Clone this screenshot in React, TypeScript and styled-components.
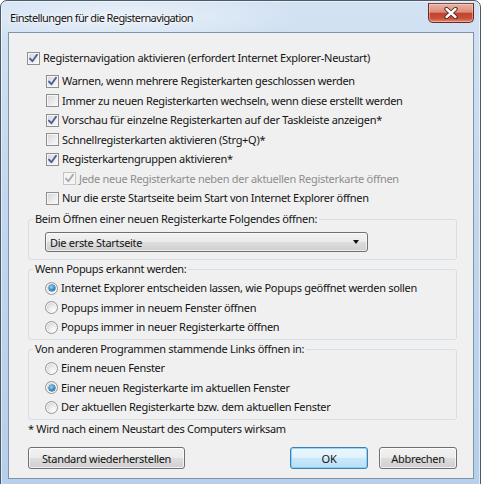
import React from 'react';
import styled, { createGlobalStyle } from 'styled-components';

const GlobalStyle = createGlobalStyle`
  html, body {
    margin: 0;
    padding: 0;
    background: #ffffff;
  }
  body {
    font-family: "Noto Sans", "Open Sans", sans-serif;
    font-size: 11px;
    letter-spacing: -0.3px;
    color: #141414;
    overflow: hidden;
  }
`;

type CheckOption = { label: string; checked?: boolean; disabled?: boolean; level: 1 | 2 };

const tabOptions: CheckOption[] = [
  { label: 'Warnen, wenn mehrere Registerkarten geschlossen werden', checked: true, level: 1 },
  { label: 'Immer zu neuen Registerkarten wechseln, wenn diese erstellt werden', level: 1 },
  { label: 'Vorschau für einzelne Registerkarten auf der Taskleiste anzeigen*', checked: true, level: 1 },
  { label: 'Schnellregisterkarten aktivieren (Strg+Q)*', level: 1 },
  { label: 'Registerkartengruppen aktivieren*', checked: true, level: 1 },
  { label: 'Jede neue Registerkarte neben der aktuellen Registerkarte öffnen', checked: true, disabled: true, level: 2 },
  { label: 'Nur die erste Startseite beim Start von Internet Explorer öffnen', level: 1 },
];

const popupOptions = [
  'Internet Explorer entscheiden lassen, wie Popups geöffnet werden sollen',
  'Popups immer in neuem Fenster öffnen',
  'Popups immer in neuer Registerkarte öffnen',
];

const linkOptions = [
  'Einem neuen Fenster',
  'Einer neuen Registerkarte im aktuellen Fenster',
  'Der aktuellen Registerkarte bzw. dem aktuellen Fenster',
];

function CheckBox({ checked, disabled }: { checked?: boolean; disabled?: boolean }) {
  return (
    <Box $disabled={disabled}>
      {checked && (
        <svg width="11" height="11" viewBox="0 0 11 11">
          <path
            d="M2 5.6 L4.4 8.2 L9 1.8"
            fill="none"
            stroke={disabled ? '#a9a9a9' : '#4a5f97'}
            strokeWidth="1.9"
            strokeLinecap="round"
            strokeLinejoin="round"
          />
        </svg>
      )}
    </Box>
  );
}

function Radio({ checked }: { checked?: boolean }) {
  return <RadioBox>{checked && <RadioDot />}</RadioBox>;
}

function RadioList({ items, selected }: { items: string[]; selected: number }) {
  return (
    <>
      {items.map((label, i) => (
        <OptionRow key={label} $level={0}>
          <Radio checked={i === selected} />
          <Label>{label}</Label>
        </OptionRow>
      ))}
    </>
  );
}

export default function App() {
  return (
    <>
      <GlobalStyle />
      <Window>
        <TitleBar>
          <Caption>Einstellungen für die Registernavigation</Caption>
          <CloseButton>
            <svg width="16" height="12" viewBox="0 0 16 12">
              <path d="M3.5 2 L12.5 10 M12.5 2 L3.5 10" stroke="#4b2119" strokeWidth="4.2" strokeLinecap="round" />
              <path d="M3.5 2 L12.5 10 M12.5 2 L3.5 10" stroke="#ffffff" strokeWidth="2.4" strokeLinecap="round" />
            </svg>
          </CloseButton>
        </TitleBar>

        <Client>
          <MainRow>
            <CheckBox checked />
            <Label>Registernavigation aktivieren (erfordert Internet Explorer-Neustart)</Label>
          </MainRow>

          <SubList>
            {tabOptions.map((o) => (
              <OptionRow key={o.label} $level={o.level}>
                <CheckBox checked={o.checked} disabled={o.disabled} />
                <Label $disabled={o.disabled}>{o.label}</Label>
              </OptionRow>
            ))}
          </SubList>

          <Group $top={3.5} $padTop={5} $padBottom={7}>
            <GroupTitle>Beim Öffnen einer neuen Registerkarte Folgendes öffnen:</GroupTitle>
            <Select>
              <span>Die erste Startseite</span>
              <Arrow />
            </Select>
          </Group>

          <Group $top={1} $padTop={1} $padBottom={2}>
            <GroupTitle>Wenn Popups erkannt werden:</GroupTitle>
            <RadioList items={popupOptions} selected={0} />
          </Group>

          <Group $top={1.5} $padTop={1} $padBottom={2}>
            <GroupTitle>Von anderen Programmen stammende Links öffnen in:</GroupTitle>
            <RadioList items={linkOptions} selected={1} />
          </Group>

          <Note>* Wird nach einem Neustart des Computers wirksam</Note>

          <ButtonRow>
            <Button $width={157}>Standard wiederherstellen</Button>
            <Spacer />
            <Button $width={78} $primary>OK</Button>
            <Button $width={78}>Abbrechen</Button>
          </ButtonRow>
        </Client>
      </Window>
    </>
  );
}

// frame
const Window = styled.div`
  box-sizing: border-box;
  width: 481px;
  height: 486px;
  display: flex;
  flex-direction: column;
  padding: 0 6px 6px 7px;
  border: 1px solid #4d5a68;
  border-radius: 7px 7px 0 0;
  background:
    radial-gradient(ellipse 180px 26px at 120px 16px, rgba(255, 255, 255, 0.55), rgba(255, 255, 255, 0) 100%),
    linear-gradient(180deg, #d3e2f3 0%, #c3d8ee 40%, #b6cfea 100%);
  box-shadow: inset 0 0 0 1px rgba(255, 255, 255, 0.55);
`;

const TitleBar = styled.div`
  height: 31px;
  display: flex;
  justify-content: space-between;
  align-items: flex-start;
`;

const Caption = styled.div`
  padding: 8px 0 0 2px;
  font-size: 11px;
  letter-spacing: -0.6px;
  line-height: 18px;
  color: #111;
  text-shadow: 0 0 6px rgba(255, 255, 255, 0.9), 0 0 2px rgba(255, 255, 255, 0.9);
`;

const CloseButton = styled.div`
  box-sizing: border-box;
  width: 46px;
  height: 20px;
  margin-top: 2px;
  display: flex;
  align-items: center;
  justify-content: center;
  border: 1px solid #6b2a20;
  border-top-color: #8a4a40;
  border-radius: 0 0 5px 5px;
  background: linear-gradient(180deg, #eab2a4 0%, #dc8d7c 45%, #c3432d 52%, #c8503a 80%, #e18c6e 100%);
  box-shadow: inset 0 0 0 1px rgba(255, 220, 210, 0.45);
`;

const Client = styled.div`
  flex: 1;
  display: flex;
  flex-direction: column;
  padding: 15px 16px 0 19px;
  background: #f0f0f0;
  border: 1px solid #8193a8;
`;

// rows
const MainRow = styled.div`
  height: 20px;
  margin-left: -1px;
  display: flex;
  align-items: center;
  gap: 3px;
`;

const SubList = styled.div`
  margin-top: 3.25px;
  display: flex;
  flex-direction: column;
`;

const OptionRow = styled.div<{ $level: 0 | 1 | 2 }>`
  height: 19.5px;
  padding-left: ${(p) => [0, 18, 35][p.$level]}px;
  display: flex;
  align-items: center;
  gap: 3px;
`;

const Label = styled.span<{ $disabled?: boolean }>`
  white-space: nowrap;
  line-height: 16px;
  color: ${(p) => (p.$disabled ? '#8d8d8d' : '#141414')};
`;

const Box = styled.span<{ $disabled?: boolean }>`
  box-sizing: border-box;
  flex: none;
  width: 13px;
  height: 13px;
  display: flex;
  align-items: center;
  justify-content: center;
  border: 1px solid ${(p) => (p.$disabled ? '#c4c4c4' : '#8e8f8f')};
  background: ${(p) =>
    p.$disabled
      ? '#f4f4f4'
      : 'linear-gradient(135deg, #d3d4d6 0%, #e9e9ea 50%, #fbfbfb 100%)'};
  box-shadow: inset 0 0 0 1px #f6f6f6;
`;

const RadioBox = styled.span`
  box-sizing: border-box;
  flex: none;
  width: 13px;
  height: 13px;
  border-radius: 50%;
  display: flex;
  align-items: center;
  justify-content: center;
  border: 1px solid #979797;
  background: radial-gradient(circle at 65% 70%, #fdfdfd 0%, #e6e6e6 45%, #c9c9c9 100%);
  box-shadow: inset 0 0 0 1px rgba(255, 255, 255, 0.7);
`;

const RadioDot = styled.span`
  width: 6px;
  height: 6px;
  border-radius: 50%;
  background: radial-gradient(circle at 40% 35%, #9bdcfd 0%, #3a9ad9 45%, #15518a 100%);
  box-shadow: 0 0 0 0.5px #19446e;
`;

// groups
const Group = styled.fieldset<{ $top: number; $padTop: number; $padBottom: number }>`
  margin: ${(p) => p.$top}px 0 0 0;
  padding: ${(p) => p.$padTop}px 0 ${(p) => p.$padBottom}px 16px;
  min-width: 0;
  border: 1px solid #d5dfe5;
  border-radius: 3px;
`;

const GroupTitle = styled.legend`
  margin-left: -12px;
  padding: 0 2px;
  line-height: 16px;
  color: #141414;
`;

const Select = styled.div`
  box-sizing: border-box;
  width: 323px;
  height: 20px;
  padding: 0 8px 0 4px;
  display: flex;
  align-items: center;
  justify-content: space-between;
  border: 1px solid #707070;
  border-radius: 3px;
  background: linear-gradient(180deg, #f2f2f2 0%, #ebebeb 50%, #dddddd 51%, #cfcfcf 100%);
  box-shadow: inset 0 0 0 1px rgba(255, 255, 255, 0.6);
`;

const Arrow = styled.span`
  width: 0;
  height: 0;
  border-left: 3.5px solid transparent;
  border-right: 3.5px solid transparent;
  border-top: 4px solid #111;
`;

const Note = styled.div`
  margin: 1.5px 0 0 0;
  line-height: 16px;
`;

// buttons
const ButtonRow = styled.div`
  margin-top: 10px;
  display: flex;
  gap: 11px;
`;

const Spacer = styled.div`
  flex: 1;
`;

const Button = styled.div<{ $width: number; $primary?: boolean }>`
  box-sizing: border-box;
  width: ${(p) => p.$width}px;
  height: 22px;
  display: flex;
  align-items: center;
  justify-content: center;
  border: 1px solid ${(p) => (p.$primary ? '#3c7fb1' : '#707070')};
  border-radius: 3px;
  background: ${(p) =>
    p.$primary
      ? 'linear-gradient(180deg, #ecf7fd 0%, #dff1fb 50%, #cbe8f9 51%, #b8dff5 100%)'
      : 'linear-gradient(180deg, #f2f2f2 0%, #ebebeb 50%, #dddddd 51%, #cfcfcf 100%)'};
  box-shadow: inset 0 0 0 1px ${(p) => (p.$primary ? 'rgba(120, 200, 245, 0.7)' : 'rgba(255, 255, 255, 0.7)')};
  color: #141414;
`;
